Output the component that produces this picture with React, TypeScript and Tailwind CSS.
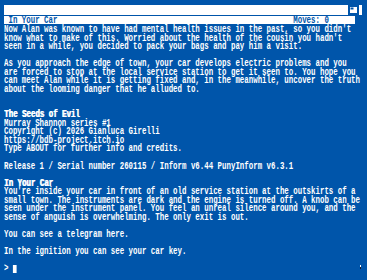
import React from 'react';

const BLUE = '#0055aa';

const story: { text: string; heading?: boolean }[] = [
  { text: "Now Alan was known to have had mental health issues in the past, so you didn't" },
  { text: "know what to make of this. Worried about the health of the cousin you hadn't" },
  { text: 'seen in a while, you decided to pack your bags and pay him a visit.' },
  { text: '' },
  { text: 'As you approach the edge of town, your car develops electric problems and you' },
  { text: 'are forced to stop at the local service station to get it seen to. You hope you' },
  { text: 'can meet Alan while it is getting fixed and, in the meanwhile, uncover the truth' },
  { text: 'about the looming danger that he alluded to.' },
  { text: '' },
  { text: '' },
  { text: 'The Seeds of Evil', heading: true },
  { text: 'Murray Shannon series #1' },
  { text: 'Copyright (c) 2026 Gianluca Girelli' },
  { text: 'https://bdb-project.itch.io' },
  { text: 'Type ABOUT for further info and credits.' },
  { text: '' },
  { text: 'Release 1 / Serial number 260115 / Inform v6.44 PunyInform v6.3.1' },
  { text: '' },
  { text: 'In Your Car', heading: true },
  { text: "You're inside your car in front of an old service station at the outskirts of a" },
  { text: 'small town. The instruments are dark and the engine is turned off. A knob can be' },
  { text: 'seen under the instrument panel. You feel an unreal silence around you, and the' },
  { text: 'sense of anguish is overwhelming. The only exit is out.' },
  { text: '' },
  { text: 'You can see a telegram here.' },
  { text: '' },
  { text: 'In the ignition you can see your car key.' },
  { text: '' },
];

const DepthGadget = () => (
  <svg width="11" height="10" viewBox="0 0 11 10">
    <rect x="0" y="0" width="11" height="10" fill={BLUE} />
    <rect x="2" y="2" width="7" height="6" fill="#ffffff" />
    <rect x="2.5" y="2.5" width="3" height="2" fill={BLUE} />
  </svg>
);

export default function App() {
  return (
    <div className="relative w-[367px] h-[280px] overflow-hidden bg-[#0055aa] text-white font-bold font-['Liberation_Mono','DejaVu_Sans_Mono',monospace]">
      {/* window title bar */}
      <div className="pt-[5px] pl-[4px] pr-[5px]">
        <div className="h-[10px] bg-white flex justify-end pr-[3px]">
          <DepthGadget />
        </div>
      </div>

      {/* status line */}
      <div className="mt-[1px] ml-[4px] w-[351px] h-[8px] bg-white">
        <div className="w-[480px] origin-top-left scale-x-[0.7415] pt-[1px] text-[10px] leading-[8.54px] whitespace-pre text-[#0055aa]">
          {' In Your Car                                                     Moves: 0'}
        </div>
      </div>

      {/* transcript */}
      <div className="mt-[2px] ml-[4px]">
        <div className="w-[480px] origin-top-left scale-x-[0.7415] text-[10px] leading-[8.54px] whitespace-pre">
          {story.map((line, i) => (
            <div
              key={i}
              className={`h-[8.54px] ${line.heading ? '[text-shadow:0.8px_0_0_#ffffff]' : ''}`}
            >
              {line.text}
            </div>
          ))}
          <div className="h-[8.54px]">
            {'> '}
            <span className="inline-block align-top w-[5.4px] h-[8.3px] bg-white" />
          </div>
        </div>
      </div>

      {/* mouse pointer speck */}
      <div className="absolute left-[360px] top-[265px] w-[1px] h-[4px] flex flex-col">
        <div className="h-[2px] bg-white" />
        <div className="h-[2px] bg-[#1a1a2a]" />
      </div>
    </div>
  );
}
